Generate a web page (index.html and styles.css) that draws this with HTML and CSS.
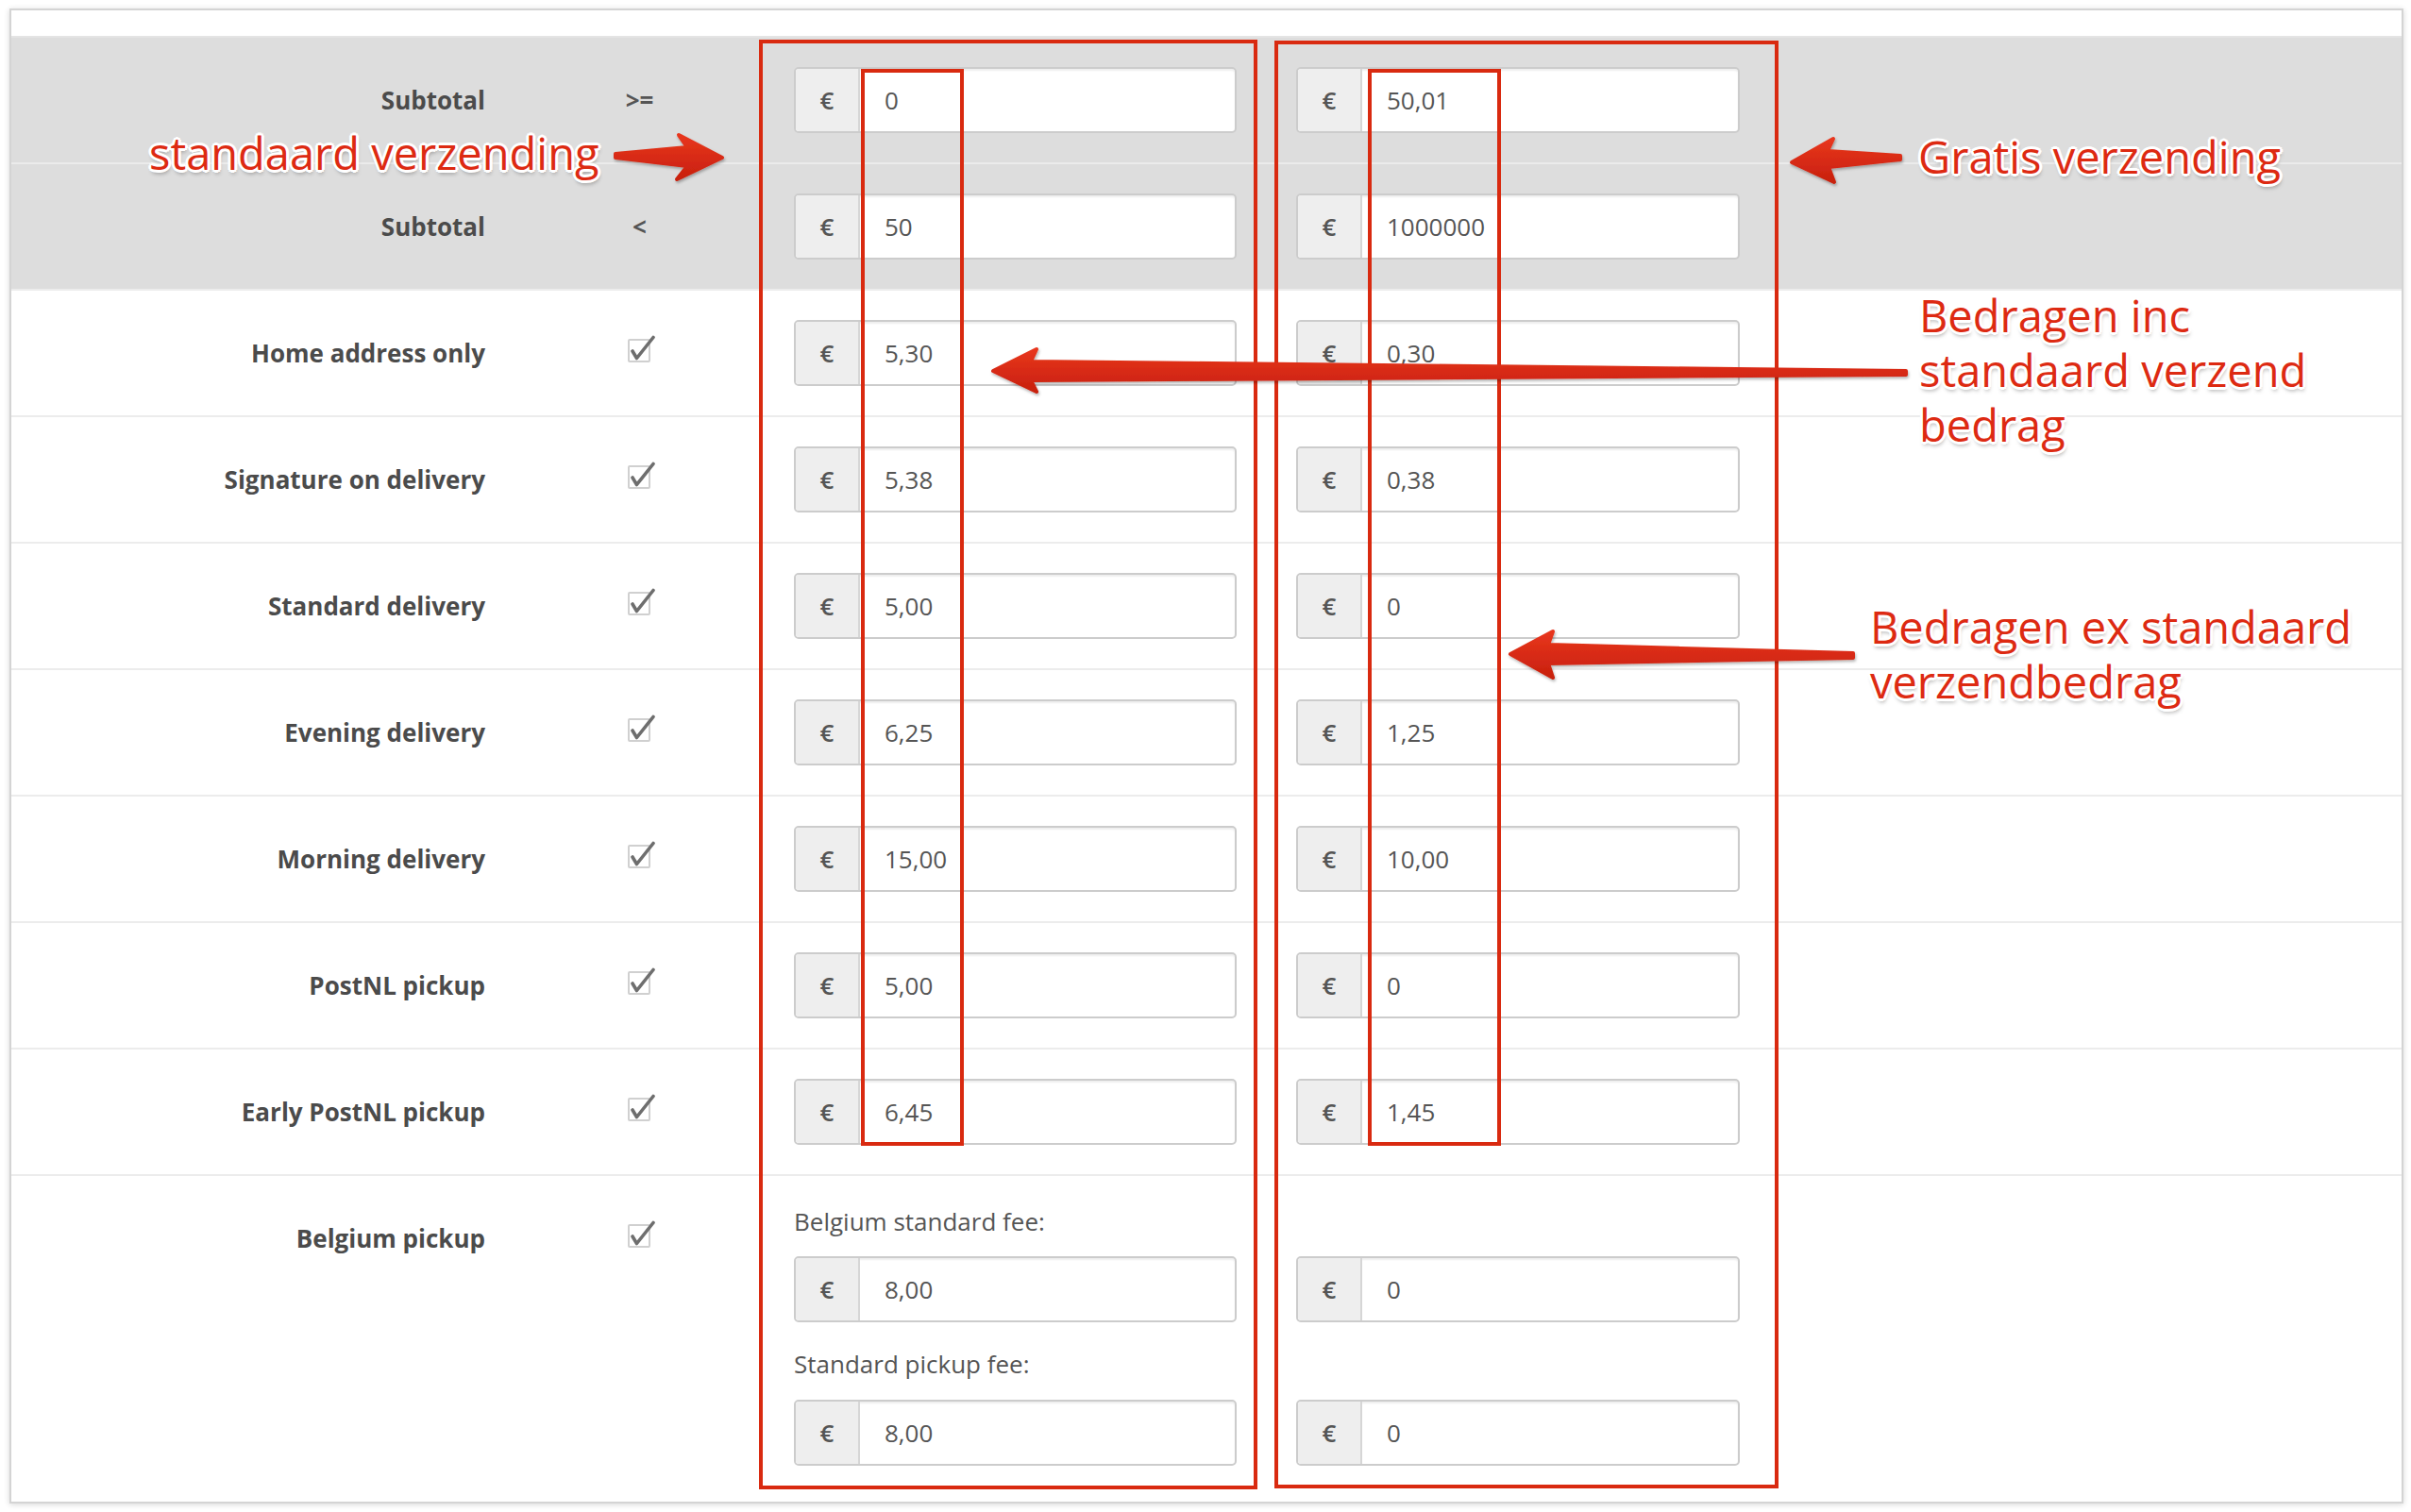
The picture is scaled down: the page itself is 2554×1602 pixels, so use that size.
FILE: index.html
```html
<!DOCTYPE html>
<html lang="en">
<head>
<meta charset="utf-8">
<title>Shipping rates</title>
<link rel="stylesheet" href="styles.css">
</head>
<body>
<div class="page">
  <div class="card">
    <div class="topstrip"></div>

    <div class="row row-head">
      <div class="label">Subtotal</div>
      <div class="op">&gt;=</div>
      <div class="cell"><div class="ig"><span class="addon">€</span><span class="val">0</span></div></div>
      <div class="cell cell2"><div class="ig"><span class="addon">€</span><span class="val">50,01</span></div></div>
    </div>

    <div class="row row-head row-head2">
      <div class="label">Subtotal</div>
      <div class="op">&lt;</div>
      <div class="cell"><div class="ig"><span class="addon">€</span><span class="val">50</span></div></div>
      <div class="cell cell2"><div class="ig"><span class="addon">€</span><span class="val">1000000</span></div></div>
    </div>

    <div class="row">
      <div class="label">Home address only</div>
      <div class="op"><svg class="chk" viewBox="0 0 32 34" width="32" height="34"><rect x="4" y="5" width="22" height="23" rx="1" class="chk-box"/><path d="M8 17 L12.5 24.5 L30 2.5" class="chk-mark"/></svg></div>
      <div class="cell"><div class="ig"><span class="addon">€</span><span class="val">5,30</span></div></div>
      <div class="cell cell2"><div class="ig"><span class="addon">€</span><span class="val">0,30</span></div></div>
    </div>

    <div class="row">
      <div class="label">Signature on delivery</div>
      <div class="op"><svg class="chk" viewBox="0 0 32 34" width="32" height="34"><rect x="4" y="5" width="22" height="23" rx="1" class="chk-box"/><path d="M8 17 L12.5 24.5 L30 2.5" class="chk-mark"/></svg></div>
      <div class="cell"><div class="ig"><span class="addon">€</span><span class="val">5,38</span></div></div>
      <div class="cell cell2"><div class="ig"><span class="addon">€</span><span class="val">0,38</span></div></div>
    </div>

    <div class="row">
      <div class="label">Standard delivery</div>
      <div class="op"><svg class="chk" viewBox="0 0 32 34" width="32" height="34"><rect x="4" y="5" width="22" height="23" rx="1" class="chk-box"/><path d="M8 17 L12.5 24.5 L30 2.5" class="chk-mark"/></svg></div>
      <div class="cell"><div class="ig"><span class="addon">€</span><span class="val">5,00</span></div></div>
      <div class="cell cell2"><div class="ig"><span class="addon">€</span><span class="val">0</span></div></div>
    </div>

    <div class="row">
      <div class="label">Evening delivery</div>
      <div class="op"><svg class="chk" viewBox="0 0 32 34" width="32" height="34"><rect x="4" y="5" width="22" height="23" rx="1" class="chk-box"/><path d="M8 17 L12.5 24.5 L30 2.5" class="chk-mark"/></svg></div>
      <div class="cell"><div class="ig"><span class="addon">€</span><span class="val">6,25</span></div></div>
      <div class="cell cell2"><div class="ig"><span class="addon">€</span><span class="val">1,25</span></div></div>
    </div>

    <div class="row">
      <div class="label">Morning delivery</div>
      <div class="op"><svg class="chk" viewBox="0 0 32 34" width="32" height="34"><rect x="4" y="5" width="22" height="23" rx="1" class="chk-box"/><path d="M8 17 L12.5 24.5 L30 2.5" class="chk-mark"/></svg></div>
      <div class="cell"><div class="ig"><span class="addon">€</span><span class="val">15,00</span></div></div>
      <div class="cell cell2"><div class="ig"><span class="addon">€</span><span class="val">10,00</span></div></div>
    </div>

    <div class="row">
      <div class="label">PostNL pickup</div>
      <div class="op"><svg class="chk" viewBox="0 0 32 34" width="32" height="34"><rect x="4" y="5" width="22" height="23" rx="1" class="chk-box"/><path d="M8 17 L12.5 24.5 L30 2.5" class="chk-mark"/></svg></div>
      <div class="cell"><div class="ig"><span class="addon">€</span><span class="val">5,00</span></div></div>
      <div class="cell cell2"><div class="ig"><span class="addon">€</span><span class="val">0</span></div></div>
    </div>

    <div class="row">
      <div class="label">Early PostNL pickup</div>
      <div class="op"><svg class="chk" viewBox="0 0 32 34" width="32" height="34"><rect x="4" y="5" width="22" height="23" rx="1" class="chk-box"/><path d="M8 17 L12.5 24.5 L30 2.5" class="chk-mark"/></svg></div>
      <div class="cell"><div class="ig"><span class="addon">€</span><span class="val">6,45</span></div></div>
      <div class="cell cell2"><div class="ig"><span class="addon">€</span><span class="val">1,45</span></div></div>
    </div>

    <div class="row row-last">
      <div class="label">Belgium pickup</div>
      <div class="op"><svg class="chk" viewBox="0 0 32 34" width="32" height="34"><rect x="4" y="5" width="22" height="23" rx="1" class="chk-box"/><path d="M8 17 L12.5 24.5 L30 2.5" class="chk-mark"/></svg></div>
      <div class="cell">
        <div class="sublabel">Belgium standard fee:</div>
        <div class="ig"><span class="addon">€</span><span class="val">8,00</span></div>
        <div class="sublabel sublabel-2">Standard pickup fee:</div>
        <div class="ig"><span class="addon">€</span><span class="val">8,00</span></div>
      </div>
      <div class="cell cell2">
        <div class="sublabel"></div>
        <div class="ig"><span class="addon">€</span><span class="val">0</span></div>
        <div class="sublabel sublabel-2"></div>
        <div class="ig"><span class="addon">€</span><span class="val">0</span></div>
      </div>
    </div>
  </div>

  <svg class="overlay" width="2554" height="1602" viewBox="0 0 2554 1602">
    <defs>
      <linearGradient id="ag" x1="0" y1="0" x2="0" y2="1">
        <stop offset="0" stop-color="#e8361d"/>
        <stop offset="1" stop-color="#c8200e"/>
      </linearGradient>
      <filter id="sh" x="-10%" y="-50%" width="120%" height="200%">
        <feDropShadow dx="1" dy="2" stdDeviation="1.5" flood-color="#000" flood-opacity="0.3"/>
      </filter>
    </defs>
    <g class="boxes">
      <rect x="806" y="44" width="524" height="1532"/>
      <rect x="1352" y="45" width="530" height="1530"/>
      <rect x="914" y="75" width="105" height="1137"/>
      <rect x="1451" y="75" width="137" height="1137"/>
    </g>
    <g class="arrows" filter="url(#sh)">
      <polygon points="652,163 728,156 719,143 765,167 717,190 728,176 652,167"/>
      <polygon points="1898,172 1942,147 1936,160 2013,165 2013,169 1937,177 1943,193"/>
      <polygon points="1052,393 1098,370 1092,383 2019,393 2019,397 1092,403 1098,415"/>
      <polygon points="1600,693 1645,669 1640,683 1963,692 1963,697 1640,703 1645,718"/>
    </g>
  </svg>

  <div class="note note-std">standaard verzending</div>
  <div class="note note-gratis">Gratis verzending</div>
  <div class="note note-inc">Bedragen inc<br>standaard verzend<br>bedrag</div>
  <div class="note note-ex">Bedragen ex standaard<br>verzendbedrag</div>
</div>
</body>
</html>
```

FILE: styles.css
```css
html, body {
  margin: 0;
  padding: 0;
  background: #ffffff;
}

body {
  font-family: "Open Sans", "Liberation Sans", sans-serif;
  color: #555555;
}

.page {
  position: relative;
  width: 2554px;
  height: 1602px;
  overflow: hidden;
}

.card {
  margin: 9px 0 0 10px;
  width: 2536px;
  box-sizing: border-box;
  border: 2px solid #d4d4d4;
  background: #ffffff;
  box-shadow: 0 1px 6px rgba(0, 0, 0, 0.16);
}

.topstrip {
  height: 27px;
}

.row {
  display: grid;
  grid-template-columns: 502px 327px 469px 533px 1fr;
  align-items: start;
  border-top: 2px solid #ececec;
  padding: 31px 0;
}

.row-head {
  background: #dddddd;
  border-top-color: #e4e4e4;
}

.row-head2 {
  border-top-color: #ebebeb;
}

.row-last {
  padding-bottom: 38px;
}

.label {
  font-size: 26px;
  font-weight: 700;
  color: #4b4b4b;
  text-align: right;
  line-height: 70px;
  white-space: nowrap;
}

.op {
  height: 70px;
  display: flex;
  align-items: center;
  justify-content: center;
  font-size: 26px;
  font-weight: 700;
  color: #555555;
}

.chk {
  display: block;
  margin-top: -4px;
}

.chk-box {
  fill: #ffffff;
  stroke: #d0d0d0;
  stroke-width: 2;
}

.chk-mark {
  fill: none;
  stroke: #6e6e6e;
  stroke-width: 3.6;
  stroke-linecap: round;
  stroke-linejoin: round;
}

.cell2 {
  padding-left: 63px;
}

.ig {
  display: flex;
  height: 70px;
  box-sizing: border-box;
  border: 2px solid #cccccc;
  border-radius: 5px;
  overflow: hidden;
  background: #ffffff;
  box-shadow: inset 0 2px 2px rgba(0, 0, 0, 0.07);
}

.addon {
  width: 66px;
  flex: none;
  background: #eeeeee;
  border-right: 2px solid #d6d6d6;
  display: flex;
  align-items: center;
  justify-content: center;
  font-size: 26px;
  font-weight: 600;
  color: #555555;
}

.val {
  flex: 1;
  padding-left: 26px;
  line-height: 66px;
  font-size: 26px;
  color: #555555;
}

.sublabel {
  height: 40px;
  line-height: 34px;
  font-size: 26px;
  color: #555555;
  margin-bottom: 14px;
}

.sublabel-2 {
  margin-top: 27px;
  margin-bottom: 15px;
}

.overlay {
  position: absolute;
  left: 0;
  top: 0;
  pointer-events: none;
}

.boxes rect {
  fill: none;
  stroke: #d92a10;
  stroke-width: 4;
}

.arrows polygon {
  fill: url(#ag);
  stroke: url(#ag);
  stroke-width: 4;
  stroke-linejoin: round;
}

.note {
  position: absolute;
  font-family: "Open Sans", "Liberation Sans", sans-serif;
  font-size: 47px;
  line-height: 58px;
  color: #dd2a12;
  white-space: nowrap;
  text-shadow:
    0 -3px 0 #fff, 0 3px 0 #fff, -3px 0 0 #fff, 3px 0 0 #fff,
    -2px -2px 0 #fff, 2px -2px 0 #fff, -2px 2px 0 #fff, 2px 2px 0 #fff,
    1px 4px 4px rgba(0, 0, 0, 0.35);
}

.note-std {
  left: 158px;
  top: 133px;
}

.note-gratis {
  left: 2032px;
  top: 137px;
}

.note-inc {
  left: 2033px;
  top: 305px;
}

.note-ex {
  left: 1981px;
  top: 635px;
}
```
